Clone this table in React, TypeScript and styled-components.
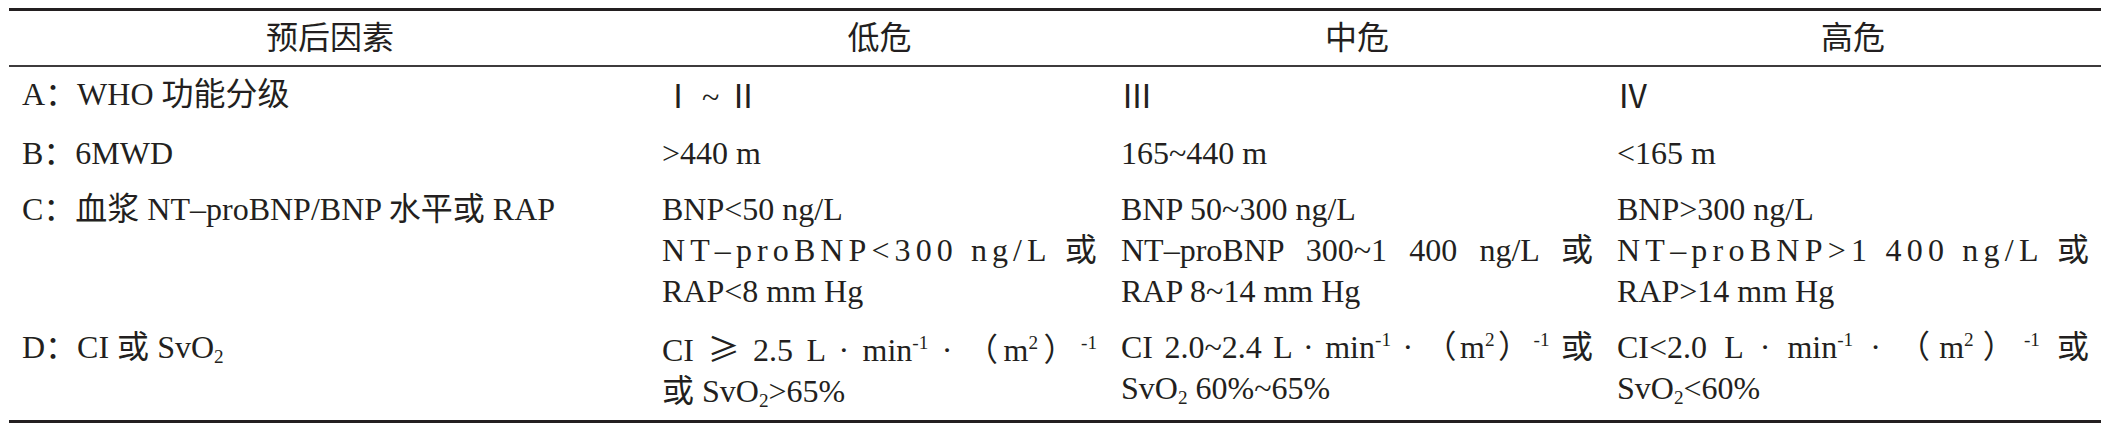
import React from 'react';
import styled, { createGlobalStyle } from 'styled-components';

const GlobalStyle = createGlobalStyle`
  html, body {
    margin: 0;
    padding: 0;
    background: #fff;
  }
  body {
    font-family: "Liberation Serif", "Noto Sans CJK SC", serif;
    color: #231f20;
  }
`;

const Table = styled.div`
  width: 2092px;
  margin: 8px 0 0 9px;
  border-top: 3px solid #231f20;
  border-bottom: 3px solid #231f20;
  font-size: 32px;
`;

const Row = styled.div<{ $head?: boolean }>`
  display: grid;
  grid-template-columns: 641px 459px 496px 496px;
  border-bottom: ${p => (p.$head ? '2px solid #3d3b3c' : 'none')};
`;

const Cell = styled.div<{ $head?: boolean }>`
  padding: ${p => (p.$head ? '7px 12px' : '7px 12px 8px 12px')};
  line-height: ${p => (p.$head ? '40px' : '41px')};
  text-align: ${p => (p.$head ? 'center' : 'left')};
  &:first-child {
    padding-left: 13px;
  }
`;

const Line = styled.div`
  white-space: nowrap;
`;

// justified at the spaces, like a wrapped line of the source table
const FillLine = styled.div`
  text-align: justify;
  text-align-last: justify;
`;

// justified between every character
const SpreadLine = styled.div`
  display: flex;
  justify-content: space-between;
`;

const Glyph = styled.span`
  white-space: pre;
`;

// full-width signs (roman numerals, ≥) come from the CJK face
const Wide = styled.span`
  font-family: "Noto Sans CJK SC", sans-serif;
`;

const Sup = styled.sup`
  font-size: 0.6em;
  line-height: 0;
  vertical-align: 0.6em;
`;

const Sub = styled.sub`
  font-size: 0.6em;
  line-height: 0;
  vertical-align: -0.25em;
`;

const Spread = ({ text }: { text: string }) => (
  <SpreadLine>
    {text.split('').map((c, i) => (
      <Glyph key={i}>{c}</Glyph>
    ))}
  </SpreadLine>
);

const SvO2 = () => (
  <>
    SvO<Sub>2</Sub>
  </>
);

const Unit = () => (
  <>
    L · min<Sup>-1</Sup> · （m<Sup>2</Sup>）<Sup>-1</Sup>
  </>
);

const head = ['预后因素', '低危', '中危', '高危'];

const rows: React.ReactNode[][] = [
  [
    <Line>A：WHO 功能分级</Line>,
    <Line>
      <Wide>Ⅰ</Wide> ~ <Wide>Ⅱ</Wide>
    </Line>,
    <Line>
      <Wide>Ⅲ</Wide>
    </Line>,
    <Line>
      <Wide>Ⅳ</Wide>
    </Line>,
  ],
  [
    <Line>B：6MWD</Line>,
    <Line>&gt;440 m</Line>,
    <Line>165~440 m</Line>,
    <Line>&lt;165 m</Line>,
  ],
  [
    <Line>C：血浆 NT–proBNP/BNP 水平或 RAP</Line>,
    <>
      <Line>BNP&lt;50 ng/L</Line>
      <Spread text="NT–proBNP<300 ng/L 或" />
      <Line>RAP&lt;8 mm Hg</Line>
    </>,
    <>
      <Line>BNP 50~300 ng/L</Line>
      <FillLine>NT–proBNP 300~1 400 ng/L 或</FillLine>
      <Line>RAP 8~14 mm Hg</Line>
    </>,
    <>
      <Line>BNP&gt;300 ng/L</Line>
      <Spread text="NT–proBNP>1 400 ng/L 或" />
      <Line>RAP&gt;14 mm Hg</Line>
    </>,
  ],
  [
    <Line>
      D：CI 或 <SvO2 />
    </Line>,
    <>
      <FillLine>
        CI <Wide>≥</Wide> 2.5 <Unit />
      </FillLine>
      <Line>
        或 <SvO2 />&gt;65%
      </Line>
    </>,
    <>
      <FillLine>
        CI 2.0~2.4 <Unit /> 或
      </FillLine>
      <Line>
        <SvO2 /> 60%~65%
      </Line>
    </>,
    <>
      <FillLine>
        CI&lt;2.0 <Unit /> 或
      </FillLine>
      <Line>
        <SvO2 />&lt;60%
      </Line>
    </>,
  ],
];

function App() {
  return (
    <>
      <GlobalStyle />
      <Table>
        <Row $head>
          {head.map(h => (
            <Cell $head key={h}>
              {h}
            </Cell>
          ))}
        </Row>
        {rows.map((cells, r) => (
          <Row key={r}>
            {cells.map((c, i) => (
              <Cell key={i}>{c}</Cell>
            ))}
          </Row>
        ))}
      </Table>
    </>
  );
}

export default App;
